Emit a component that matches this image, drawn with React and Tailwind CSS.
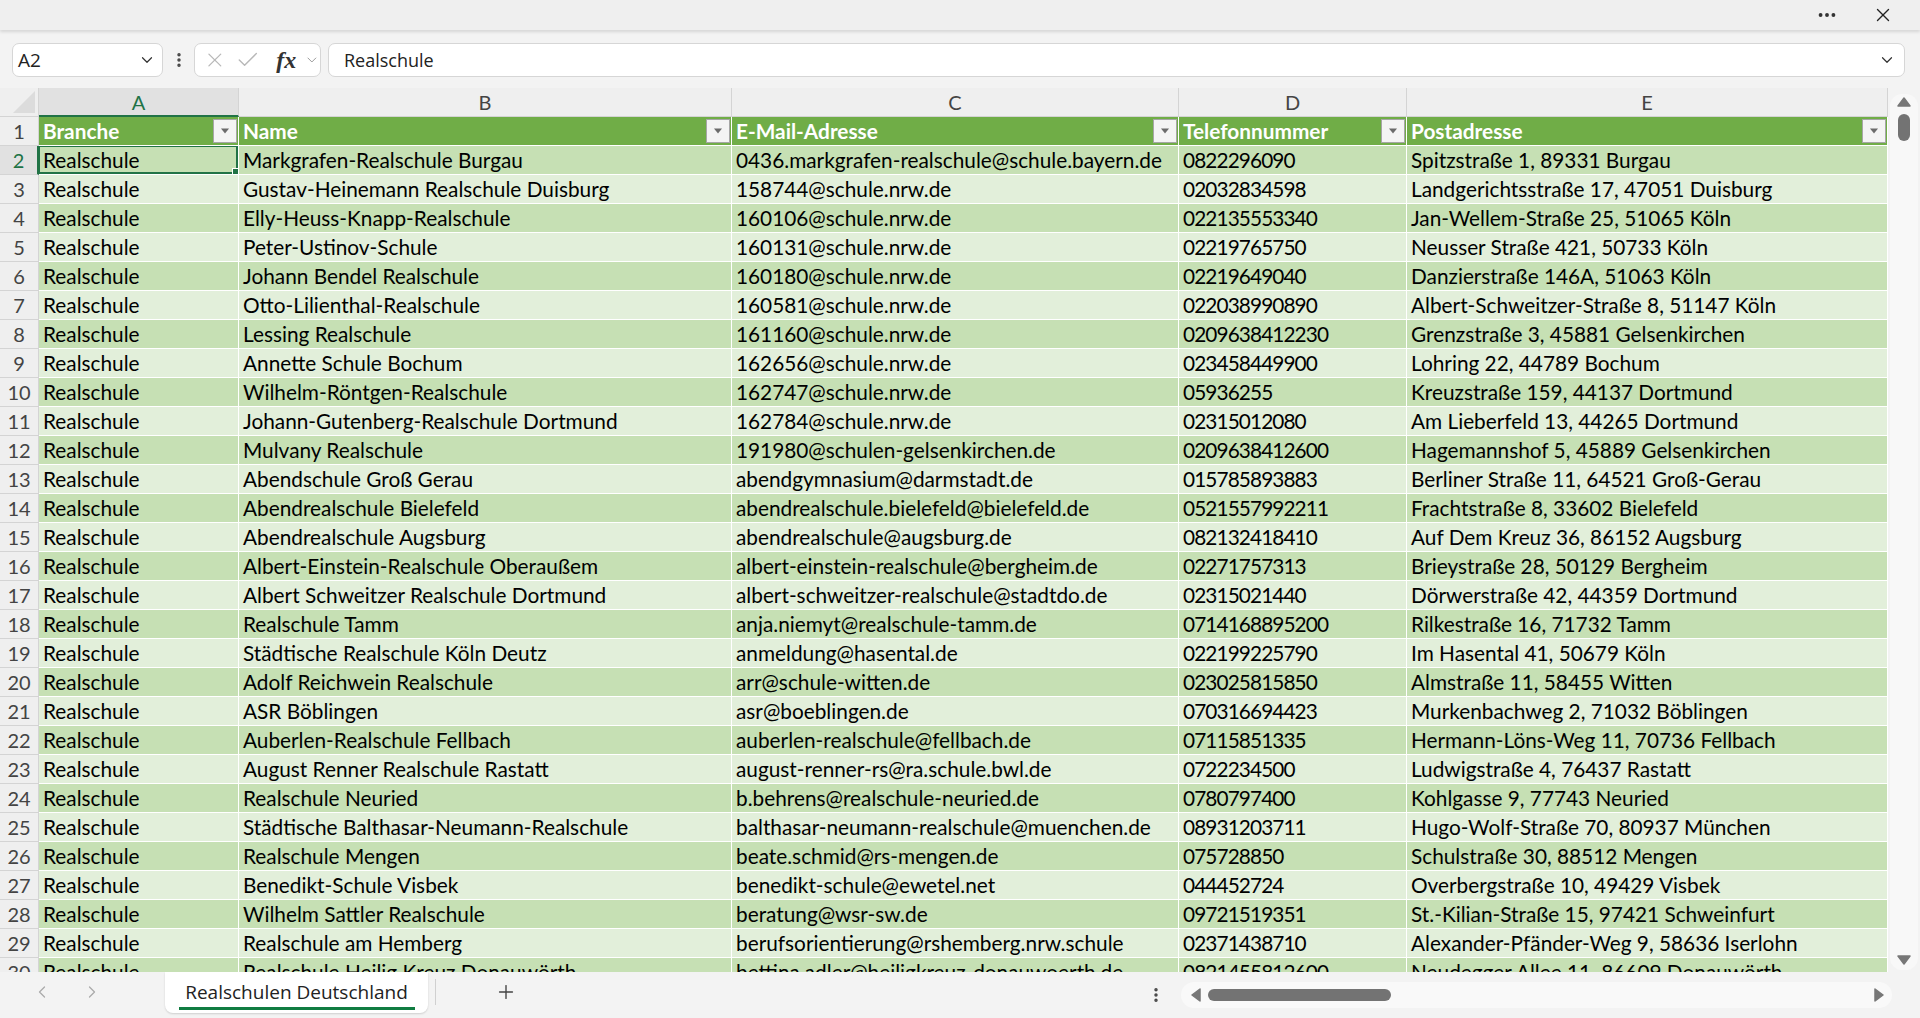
import { ChevronDown, ChevronLeft, ChevronRight, Plus, X, Check, MoreHorizontal, MoreVertical } from 'lucide-react';

const rows = [
  ['Realschule', 'Markgrafen-Realschule Burgau', '0436.markgrafen-realschule@schule.bayern.de', '0822296090', 'Spitzstraße 1, 89331 Burgau'],
  ['Realschule', 'Gustav-Heinemann Realschule Duisburg', '158744@schule.nrw.de', '02032834598', 'Landgerichtsstraße 17, 47051 Duisburg'],
  ['Realschule', 'Elly-Heuss-Knapp-Realschule', '160106@schule.nrw.de', '022135553340', 'Jan-Wellem-Straße 25, 51065 Köln'],
  ['Realschule', 'Peter-Ustinov-Schule', '160131@schule.nrw.de', '02219765750', 'Neusser Straße 421, 50733 Köln'],
  ['Realschule', 'Johann Bendel Realschule', '160180@schule.nrw.de', '02219649040', 'Danzierstraße 146A, 51063 Köln'],
  ['Realschule', 'Otto-Lilienthal-Realschule', '160581@schule.nrw.de', '022038990890', 'Albert-Schweitzer-Straße 8, 51147 Köln'],
  ['Realschule', 'Lessing Realschule', '161160@schule.nrw.de', '0209638412230', 'Grenzstraße 3, 45881 Gelsenkirchen'],
  ['Realschule', 'Annette Schule Bochum', '162656@schule.nrw.de', '023458449900', 'Lohring 22, 44789 Bochum'],
  ['Realschule', 'Wilhelm-Röntgen-Realschule', '162747@schule.nrw.de', '05936255', 'Kreuzstraße 159, 44137 Dortmund'],
  ['Realschule', 'Johann-Gutenberg-Realschule Dortmund', '162784@schule.nrw.de', '02315012080', 'Am Lieberfeld 13, 44265 Dortmund'],
  ['Realschule', 'Mulvany Realschule', '191980@schulen-gelsenkirchen.de', '0209638412600', 'Hagemannshof 5, 45889 Gelsenkirchen'],
  ['Realschule', 'Abendschule Groß Gerau', 'abendgymnasium@darmstadt.de', '015785893883', 'Berliner Straße 11, 64521 Groß-Gerau'],
  ['Realschule', 'Abendrealschule Bielefeld', 'abendrealschule.bielefeld@bielefeld.de', '0521557992211', 'Frachtstraße 8, 33602 Bielefeld'],
  ['Realschule', 'Abendrealschule Augsburg', 'abendrealschule@augsburg.de', '082132418410', 'Auf Dem Kreuz 36, 86152 Augsburg'],
  ['Realschule', 'Albert-Einstein-Realschule Oberaußem', 'albert-einstein-realschule@bergheim.de', '02271757313', 'Brieystraße 28, 50129 Bergheim'],
  ['Realschule', 'Albert Schweitzer Realschule Dortmund', 'albert-schweitzer-realschule@stadtdo.de', '02315021440', 'Dörwerstraße 42, 44359 Dortmund'],
  ['Realschule', 'Realschule Tamm', 'anja.niemyt@realschule-tamm.de', '0714168895200', 'Rilkestraße 16, 71732 Tamm'],
  ['Realschule', 'Städtische Realschule Köln Deutz', 'anmeldung@hasental.de', '022199225790', 'Im Hasental 41, 50679 Köln'],
  ['Realschule', 'Adolf Reichwein Realschule', 'arr@schule-witten.de', '023025815850', 'Almstraße 11, 58455 Witten'],
  ['Realschule', 'ASR Böblingen', 'asr@boeblingen.de', '070316694423', 'Murkenbachweg 2, 71032 Böblingen'],
  ['Realschule', 'Auberlen-Realschule Fellbach', 'auberlen-realschule@fellbach.de', '07115851335', 'Hermann-Löns-Weg 11, 70736 Fellbach'],
  ['Realschule', 'August Renner Realschule Rastatt', 'august-renner-rs@ra.schule.bwl.de', '0722234500', 'Ludwigstraße 4, 76437 Rastatt'],
  ['Realschule', 'Realschule Neuried', 'b.behrens@realschule-neuried.de', '0780797400', 'Kohlgasse 9, 77743 Neuried'],
  ['Realschule', 'Städtische Balthasar-Neumann-Realschule', 'balthasar-neumann-realschule@muenchen.de', '08931203711', 'Hugo-Wolf-Straße 70, 80937 München'],
  ['Realschule', 'Realschule Mengen', 'beate.schmid@rs-mengen.de', '075728850', 'Schulstraße 30, 88512 Mengen'],
  ['Realschule', 'Benedikt-Schule Visbek', 'benedikt-schule@ewetel.net', '044452724', 'Overbergstraße 10, 49429 Visbek'],
  ['Realschule', 'Wilhelm Sattler Realschule', 'beratung@wsr-sw.de', '09721519351', 'St.-Kilian-Straße 15, 97421 Schweinfurt'],
  ['Realschule', 'Realschule am Hemberg', 'berufsorientierung@rshemberg.nrw.schule', '02371438710', 'Alexander-Pfänder-Weg 9, 58636 Iserlohn'],
  ['Realschule', 'Realschule Heilig Kreuz Donauwörth', 'bettina.adler@heiligkreuz-donauwoerth.de', '0821455812600', 'Neudegger Allee 11, 86609 Donauwörth'],
];

const headers = ['Branche', 'Name', 'E-Mail-Adresse', 'Telefonnummer', 'Postadresse'];
const letters = ['A', 'B', 'C', 'D', 'E'];

const cellFont = { fontFamily: 'Lato, "Open Sans", sans-serif' };

function FilterButton() {
  return (
    <div className="absolute right-[1px] bottom-[2px] w-[24px] h-[24px] bg-[#f4f4f4] border border-[#a6a6a6] flex items-center justify-center">
      <svg width="10" height="6" viewBox="0 0 10 6">
        <path d="M1 0.5 L9 0.5 L5 5.5 Z" fill="#6b6b6b" />
      </svg>
    </div>
  );
}

function Triangle({ dir }) {
  const d = {
    up: 'M1 9 L7 1 L13 9 Z',
    down: 'M1 1 L13 1 L7 9 Z',
    left: 'M9 1 L9 13 L1 7 Z',
    right: 'M1 1 L1 13 L9 7 Z',
  }[dir];
  const size = dir === 'up' || dir === 'down' ? [14, 10] : [10, 14];
  return (
    <svg width={size[0]} height={size[1]} viewBox={`0 0 ${size[0]} ${size[1]}`}>
      <path d={d} fill="#777777" stroke="#777777" strokeWidth="1.5" strokeLinejoin="round" />
    </svg>
  );
}

export default function App() {
  return (
    <div className="w-[1920px] h-[1018px] bg-[#f3f3f3] flex flex-col overflow-hidden text-black">
      {/* window title strip */}
      <div className="h-[30px] shrink-0 bg-[#efefef] shadow-[0_2px_3px_rgba(0,0,0,0.12)] flex items-center justify-end pr-[26px] gap-[34px] relative z-10">
        <MoreHorizontal size={22} strokeWidth={2.2} className="text-[#333]" />
        <X size={22} strokeWidth={1.5} className="text-[#222]" />
      </div>

      {/* formula bar */}
      <div className="h-[34px] mt-[13px] shrink-0 flex items-stretch pl-[12px] pr-[15px]" style={{ fontFamily: '"Open Sans", sans-serif' }}>
        <div className="w-[151px] bg-white border border-[#d6d6d6] rounded-[7px] flex items-center justify-between pl-[5px] pr-[6px]">
          <span className="text-[19px] text-[#222]">A2</span>
          <ChevronDown size={18} strokeWidth={1.6} className="text-[#333]" />
        </div>
        <div className="w-[31px] flex items-center justify-center">
          <MoreVertical size={18} strokeWidth={2.6} className="text-[#444]" />
        </div>
        <div className="w-[127px] bg-white border border-[#d6d6d6] rounded-[7px] flex items-center pl-[8px] gap-[8px]">
          <X size={24} strokeWidth={1.3} className="text-[#b8b8b8]" />
          <Check size={26} strokeWidth={1.3} className="text-[#b8b8b8]" />
          <span className="text-[24px] italic font-semibold text-[#333] ml-[8px] leading-none" style={{ fontFamily: '"Liberation Serif", serif' }}>fx</span>
          <ChevronDown size={16} strokeWidth={1.5} className="text-[#999]" />
        </div>
        <div className="flex-1 ml-[7px] bg-white border border-[#d6d6d6] rounded-[7px] flex items-center justify-between pl-[15px] pr-[8px]">
          <span className="text-[18px] text-[#222]">Realschule</span>
          <ChevronDown size={18} strokeWidth={1.6} className="text-[#333]" />
        </div>
      </div>

      {/* sheet + vertical scrollbar */}
      <div className="h-[884px] mt-[11px] shrink-0 flex">
        <div className="w-[1888px] overflow-hidden" style={cellFont}>
          <div className="grid grid-cols-[39px_200px_493px_447px_228px_481px] auto-rows-[29px]">
            {/* corner */}
            <div className="bg-[#efefef] border-r border-b border-[#d4d4d4] flex items-end justify-end p-[3px]">
              <svg width="22" height="22" viewBox="0 0 22 22">
                <path d="M22 0 L22 22 L0 22 Z" fill="#dcdcdc" />
              </svg>
            </div>
            {letters.map((l, i) => (
              <div
                key={l}
                className={
                  i === 0
                    ? 'bg-[#e1e1e1] border-r border-[#d4d4d4] border-b-2 border-b-[#217346] flex items-center justify-center text-[20px] text-[#217346]'
                    : 'bg-[#efefef] border-r border-b border-[#d4d4d4] flex items-center justify-center text-[20px] text-[#444]'
                }
              >
                {l}
              </div>
            ))}

            {/* header row */}
            <div className="bg-[#efefef] border-r border-b border-[#d4d4d4] flex items-center justify-center text-[20px] text-[#444]">1</div>
            {headers.map((h) => (
              <div key={h} className="relative bg-[#70ad47] border-r border-b border-white flex items-center pl-[4px] text-[20.8px] font-bold text-white whitespace-nowrap">
                {h}
                <FilterButton />
              </div>
            ))}

            {/* data rows */}
            {rows.map((r, ri) => {
              const n = ri + 2;
              const bg = ri % 2 === 0 ? 'bg-[#c6e0b4]' : 'bg-[#e2efda]';
              return [
                <div
                  key={`h${n}`}
                  className={
                    n === 2
                      ? 'bg-[#e1e1e1] border-r-2 border-r-[#217346] border-b border-b-[#d4d4d4] flex items-center justify-center text-[20px] text-[#217346]'
                      : 'bg-[#efefef] border-r border-b border-[#d4d4d4] flex items-center justify-center text-[20px] text-[#444]'
                  }
                >
                  {n}
                </div>,
                ...r.map((v, ci) => (
                  <div
                    key={`${n}-${ci}`}
                    className={`${bg} relative border-r border-b border-white flex items-center pl-[4px] text-[20.8px] whitespace-nowrap overflow-hidden ${ci === 3 ? 'tracking-[-0.9px]' : ''}`}
                  >
                    {v}
                    {n === 2 && ci === 0 && (
                      <div className="absolute -top-[1px] -left-[1px] -right-[0px] -bottom-[0px] border-2 border-[#217346]">
                        <div className="absolute -right-[4px] -bottom-[4px] w-[7px] h-[7px] bg-[#217346] outline outline-1 outline-white" />
                      </div>
                    )}
                  </div>
                )),
              ];
            })}
          </div>
        </div>

        {/* vertical scrollbar */}
        <div className="w-[32px] flex justify-center pt-[6px] pb-[2px]">
          <div className="w-[28px] h-full bg-[#f8f8f8] rounded-[12px] flex flex-col items-center pt-[3px] pb-[5px]">
            <Triangle dir="up" />
            <div className="w-[12px] h-[27px] mt-[7px] bg-[#737373] rounded-full" />
            <div className="flex-1" />
            <Triangle dir="down" />
          </div>
        </div>
      </div>

      {/* sheet tabs + horizontal scrollbar */}
      <div className="flex-1 flex items-start">
        <div className="w-[165px] h-[40px] flex items-center pl-[32px] gap-[30px] text-[#aaaaaa]">
          <ChevronLeft size={20} strokeWidth={1.5} />
          <ChevronRight size={20} strokeWidth={1.5} />
        </div>
        <div className="w-[263px] h-[41px] bg-white rounded-b-[8px] shadow-[0_1px_2px_rgba(0,0,0,0.15)] flex flex-col items-center justify-end pb-[3px]" style={{ fontFamily: '"Open Sans", sans-serif' }}>
          <span className="text-[19px] text-[#222] leading-[24px]">Realschulen Deutschland</span>
          <div className="w-[236px] h-[3px] bg-[#107c41] mt-[3px]" />
        </div>
        <div className="w-[1px] h-[26px] mt-[7px] ml-[7px] bg-[#d0d0d0]" />
        <div className="w-[140px] h-[40px] flex items-center justify-center">
          <Plus size={22} strokeWidth={1.5} className="text-[#444]" />
        </div>
        <div className="flex-1" />
        <div className="w-[40px] h-[46px] mr-[5px] flex items-center justify-center">
          <MoreVertical size={18} strokeWidth={2.6} className="text-[#444]" />
        </div>
        <div className="w-[711px] h-[26px] mt-[10px] mr-[28px] bg-[#f9f9f9] rounded-full flex items-center pl-[10px] pr-[8px]">
          <Triangle dir="left" />
          <div className="w-[183px] h-[12px] ml-[7px] bg-[#737373] rounded-full" />
          <div className="flex-1" />
          <Triangle dir="right" />
        </div>
      </div>
    </div>
  );
}
